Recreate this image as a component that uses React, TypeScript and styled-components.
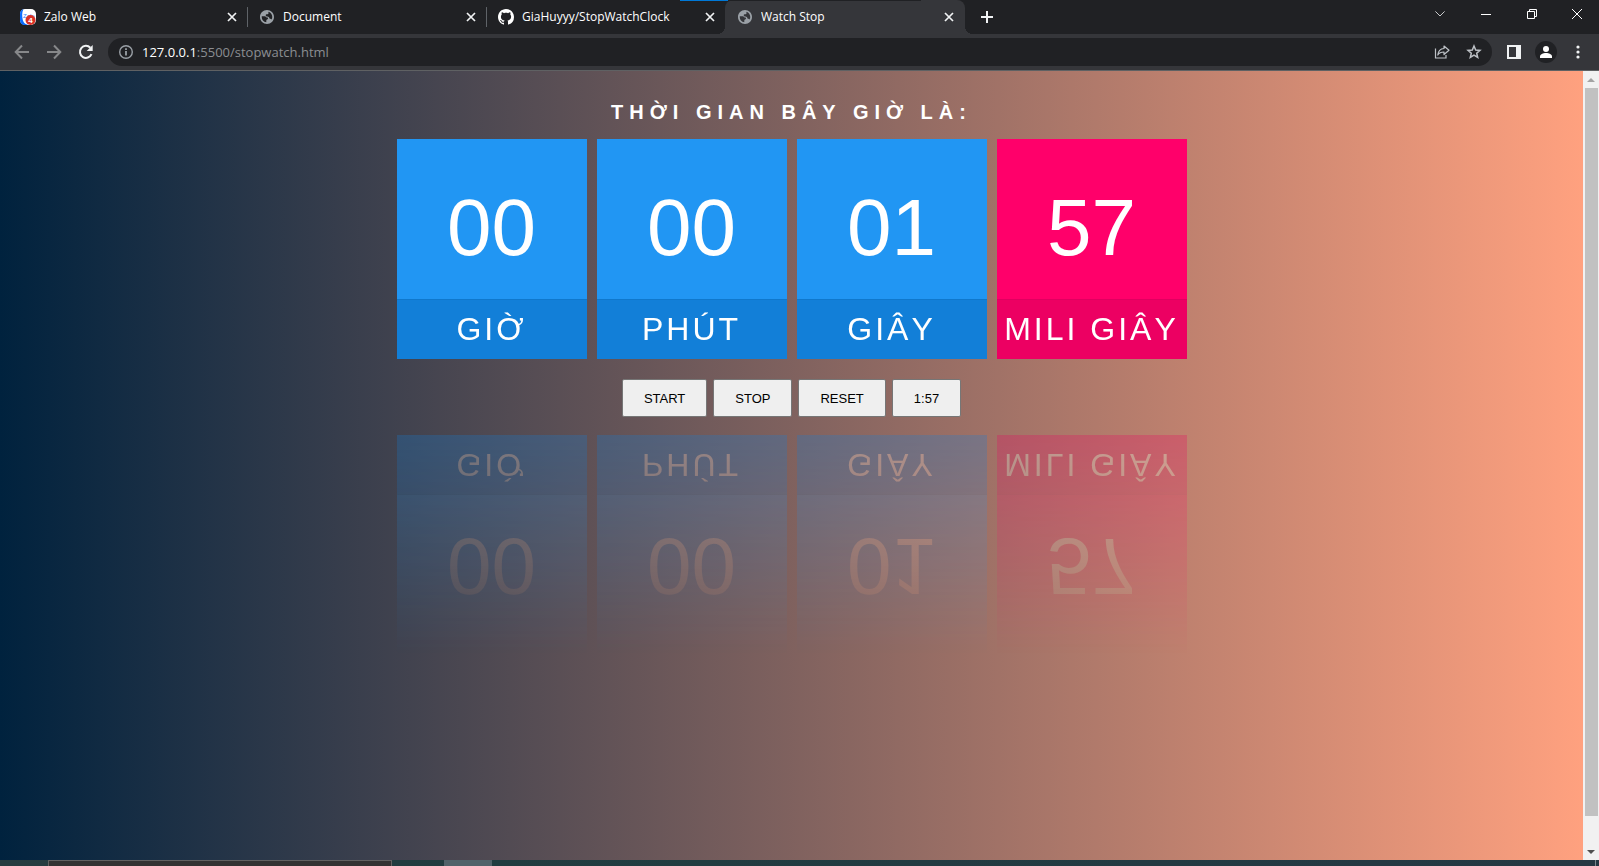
import React, { useEffect, useState } from "react";
import styled, { createGlobalStyle, css } from "styled-components";

const uiFont = `"Segoe UI", "Open Sans", "Noto Sans", sans-serif`;
const pageFont = `Arial, "Liberation Sans", sans-serif`;

const GlobalStyle = createGlobalStyle`
  * { box-sizing: border-box; }
  body { margin: 0; background: #202124; }
  button { font: inherit; color: inherit; cursor: pointer; }
`;

const Browser = styled.div`
  display: flex;
  flex-direction: column;
  min-height: 100vh;
`;

/* ---------- tab strip ---------- */

const TabStrip = styled.header`
  position: relative;
  display: flex;
  height: 34px;
  padding-left: 8px;
  background: #202124;
  color: #fff;
  font-family: ${uiFont};
  font-size: 12px;
`;

const TopEdge = styled.div`
  position: absolute;
  top: 0;
  left: 680px;
  width: 241px;
  height: 1px;
  background: linear-gradient(90deg, #0078d7 48px, #202124 48px);
`;

const Tab = styled.div<{ $active?: boolean; $divider?: boolean }>`
  position: relative;
  display: flex;
  align-items: center;
  gap: 8px;
  width: 239px;
  padding: 0 7px 0 12px;
  border-radius: 8px 8px 0 0;
  ${({ $divider }) =>
    $divider &&
    css`
      background: linear-gradient(#5f6368, #5f6368) left center / 1px 20px no-repeat;
    `}
  ${({ $active }) =>
    $active &&
    css`
      width: 240px;
      padding-right: 8px;
      background: #35363a;
      &::before,
      &::after {
        content: "";
        position: absolute;
        bottom: 0;
        width: 8px;
        height: 8px;
      }
      &::before {
        right: 100%;
        background: radial-gradient(circle at 0 0, #202124 8px, #35363a 8px);
      }
      &::after {
        left: 100%;
        background: radial-gradient(circle at 100% 0, #202124 8px, #35363a 8px);
      }
    `}
`;

const TabTitle = styled.span`
  flex: 1;
  overflow: hidden;
  white-space: nowrap;
  line-height: 16px;
`;

const IconButton = styled.button<{ $w?: number; $h?: number; $dim?: boolean }>`
  display: flex;
  align-items: center;
  justify-content: center;
  flex: none;
  width: ${({ $w = 32 }) => $w}px;
  height: ${({ $h = 28 }) => $h}px;
  padding: 0;
  border: 0;
  background: none;
  color: ${({ $dim }) => ($dim ? "#87888a" : "#f1f3f4")};
`;

const NewTab = styled.div`
  display: flex;
  align-items: center;
  padding-left: 8px;
`;

const WindowControls = styled.div`
  display: flex;
  margin-left: auto;
`;

/* ---------- toolbar ---------- */

const Toolbar = styled.nav`
  display: flex;
  align-items: center;
  height: 37px;
  padding: 0 5px 0 6px;
  background: #35363a;
  border-bottom: 1px solid #5f6163;
`;

const AddressBar = styled.form`
  display: flex;
  flex: 1;
  align-items: center;
  height: 28px;
  margin: 0 6px;
  padding: 0 2px 0 10px;
  border-radius: 14px;
  background: #202124;
  color: #9aa0a6;
  font-family: ${uiFont};
  font-size: 13px;
  line-height: 20px;
`;

const Host = styled.label`
  margin-left: 8px;
  color: #fff;
`;

const PathInput = styled.input`
  flex: 1;
  min-width: 0;
  padding: 0;
  border: 0;
  outline: 0;
  background: none;
  color: #8b8e92;
  font: inherit;
`;

/* ---------- page ---------- */

const Viewport = styled.div`
  display: flex;
  flex: 1;
`;

const Page = styled.main`
  display: flex;
  flex: 1;
  flex-direction: column;
  align-items: center;
  padding-top: 28px;
  background: linear-gradient(90deg, #00223e, #ffa17f);
  color: #fff;
  font-family: ${pageFont};
`;

const Heading = styled.h1`
  margin: 0;
  font-size: 20px;
  line-height: 26px;
  letter-spacing: 6px;
  text-transform: uppercase;
`;

const Clock = styled.div`
  display: flex;
  gap: 10px;
  margin-top: 14px;
  -webkit-box-reflect: below 76px linear-gradient(transparent, #0004);
`;

const Card = styled.div<{ $accent?: boolean }>`
  width: 190px;
  text-align: center;
  background: ${({ $accent }) => ($accent ? "#ff006a" : "#2196f3")};
`;

const Digits = styled.div`
  height: 160px;
  padding-top: 43px;
  font-size: 80px;
  line-height: 92px;
`;

const Unit = styled.div<{ $accent?: boolean }>`
  height: 60px;
  border-top: 1px solid ${({ $accent }) => ($accent ? "#e00060" : "#0f78cc")};
  background: ${({ $accent }) => ($accent ? "#ec0062" : "#127fd8")};
  font-size: 32px;
  line-height: 58px;
  letter-spacing: 3px;
  white-space: nowrap;
  text-transform: uppercase;
`;

const Actions = styled.div`
  display: flex;
  gap: 6px;
  margin-top: 20px;
`;

const ActionButton = styled.button`
  height: 38px;
  padding: 0 21px;
  border: 1px solid #767676;
  border-radius: 2px;
  background: #efefef;
  color: #000;
  font-size: 13px;
`;

/* ---------- scrollbar and taskbar ---------- */

const Scrollbar = styled.div`
  display: flex;
  flex-direction: column;
  width: 16px;
  background: #f1f1f1;
`;

const ScrollArrow = styled.button<{ $off?: boolean }>`
  display: flex;
  align-items: center;
  justify-content: center;
  height: 17px;
  padding: 0;
  border: 0;
  background: none;
  color: ${({ $off }) => ($off ? "#a3a3a3" : "#505050")};
`;

const ScrollTrack = styled.div`
  display: flex;
  flex: 1;
  flex-direction: column;
  padding: 0 1px 0 2px;
  &::after {
    content: "";
    flex: 1;
  }
`;

const ScrollThumb = styled.div`
  flex: 27;
  background: #c1c1c1;
`;

const Taskbar = styled.footer`
  display: flex;
  height: 6px;
  padding: 0 3px 0 48px;
  background: linear-gradient(90deg, #263c40, #203d40 30%, #253843);
`;

const TaskSearch = styled.div`
  width: 344px;
  border: 1px solid #626262;
  border-bottom: 0;
  background: #333;
`;

const TaskActive = styled.div`
  width: 48px;
  margin-left: 52px;
  background: #50636a;
`;

const ShowDesktop = styled.div`
  width: 1px;
  margin-left: auto;
  background: #7c888e;
`;

/* ---------- icons ---------- */

const CloseIcon = () => (
  <svg width="10" height="10" viewBox="0 0 10 10" stroke="currentColor" strokeWidth="1.7">
    <path d="M1 1l8 8M9 1l-8 8" />
  </svg>
);

const GlobeIcon = () => (
  <svg width="16" height="16" viewBox="0.6 0.6 22.8 22.8" fill="#9aa0a6">
    <path d="M12 2C6.480 2 2 6.480 2 12s4.480 10 10 10 10-4.480 10-10S17.520 2 12 2zM11 19.400c-3.950-.49-6.500-3.350-6.500-7.400 0-.3 0-.6.100-1H8.500c1.500 0 2 1 2.500 1.500.5.6 2.500.3 2.500 1.500 0 1.500-2.500 1-2.500 3zM18.500 15.500c-.5-.8-1.500-.7-2.300-1-1-.4-.7-2-1.700-2.600-1-.7-2.500-.4-3.500-.9-1.200-.7-1-2.500.2-2.900 1-.4 2.300.2 2.800-.8.5-.9-.5-1.800.3-2.700 3 1 5.200 4 5.200 7.400 0 1.300-.4 2.500-1 3.500z" />
  </svg>
);

const GithubIcon = () => (
  <svg width="16" height="16" viewBox="0 0 16 16" fill="#fff">
    <path d="M8 0C3.580 0 0 3.580 0 8c0 3.540 2.290 6.530 5.470 7.590.4.070.55-.17.55-.38 0-.19-.01-.82-.01-1.490-2.010.37-2.530-.49-2.690-.94-.09-.23-.48-.94-.82-1.130-.28-.15-.68-.52-.01-.53.63-.01 1.080.58 1.230.82.72 1.210 1.870.87 2.330.66.070-.52.28-.87.51-1.070-1.780-.2-3.640-.89-3.640-3.950 0-.87.31-1.590.82-2.150-.08-.2-.36-1.020.08-2.120 0 0 .67-.21 2.200.82.64-.18 1.320-.27 2-.27s1.360.09 2 .27c1.530-1.040 2.200-.82 2.200-.82.44 1.100.16 1.920.08 2.120.51.56.82 1.270.82 2.150 0 3.070-1.870 3.750-3.650 3.950.29.25.54.73.54 1.480 0 1.070-.01 1.930-.01 2.200 0 .21.15.46.55.38A8.010 8.010 0 0 0 16 8c0-4.420-3.580-8-8-8z" />
  </svg>
);

const ZaloIcon = () => (
  <svg width="16" height="16" viewBox="0 0 16 16" fontFamily="Arial, Liberation Sans, sans-serif">
    <rect width="16" height="16" rx="5" fill="#fff" />
    <path d="M3.500.3C1.200.8 0 2.600 0 5v6c0 3 2 5 5 5h6c-5 0-7.500-2-8.200-5C2 7.500 1.800 3 3.500.3z" fill="#0a6cff" />
    <text x="3" y="9" fontSize="6" fill="#2b80ff">
      Zalo
    </text>
    <circle cx="10.500" cy="11" r="5" fill="#d93025" />
    <text x="10.500" y="14" fontSize="8" fontWeight="700" fill="#fff" textAnchor="middle">
      4
    </text>
  </svg>
);

const ArrowIcon = ({ forward }: { forward?: boolean }) => (
  <svg width="16" height="16" viewBox="0 0 16 16" fill="none" stroke="currentColor" strokeWidth="2">
    <path d={forward ? "M1 8h13M8 1.500L14.300 8 8 14.500" : "M15 8H2M8 1.500L1.700 8 8 14.500"} />
  </svg>
);

const ReloadIcon = () => (
  <svg width="16" height="16" viewBox="0 0 16 16" fill="none">
    <path d="M13.500 10.200A6 6 0 1 1 12.300 3.700" stroke="currentColor" strokeWidth="2" />
    <path d="M14.700 1v6H8.700z" fill="currentColor" />
  </svg>
);

const InfoIcon = () => (
  <svg width="16" height="16" viewBox="0 0 16 16" fill="none">
    <circle cx="8" cy="8" r="6.300" stroke="#9aa0a6" strokeWidth="1.400" />
    <path d="M8 7v4.500M8 4.300v1.600" stroke="#9aa0a6" strokeWidth="1.800" />
  </svg>
);

const ShareIcon = () => (
  <svg width="16" height="16" viewBox="0 0 16 16" fill="none" stroke="#bdc1c6" strokeWidth="1.200">
    <path d="M1.500 4.500v9.500h10.500v-3" />
    <path d="M10 2l5 4.200-5 4.300V8C7 8 5 9 3.800 11 4.200 7.200 6.200 4.800 10 4.500z" strokeLinejoin="round" />
  </svg>
);

const StarIcon = () => (
  <svg width="16" height="16" viewBox="0 0 16 16" fill="none" stroke="#bdc1c6" strokeWidth="1.500">
    <path d="M8 2l1.700 4 4.300.4-3.300 2.800 1 4.300L8 11.200l-3.700 2.300 1-4.300L2 6.400 6.300 6z" />
  </svg>
);

const PanelIcon = () => (
  <svg width="14" height="14" viewBox="0 0 14 14">
    <path d="M0 0h14v14H0zM2 2v10h7V2z" fill="#f1f3f4" fillRule="evenodd" />
  </svg>
);

const ProfileIcon = () => (
  <svg width="22" height="22" viewBox="0 0 22 22">
    <circle cx="11" cy="11" r="11" fill="#202124" />
    <circle cx="11" cy="8" r="3" fill="#fff" />
    <path d="M5 17v-1.500c0-2.300 3-3.500 6-3.500s6 1.200 6 3.500V17z" fill="#fff" />
  </svg>
);

const MenuIcon = () => (
  <svg width="4" height="14" viewBox="0 0 4 14" fill="#f1f3f4">
    <circle cx="2" cy="2" r="1.600" />
    <circle cx="2" cy="7" r="1.600" />
    <circle cx="2" cy="12" r="1.600" />
  </svg>
);

const PlusIcon = () => (
  <svg width="12" height="12" viewBox="0 0 12 12" stroke="currentColor" strokeWidth="2">
    <path d="M6 0v12M0 6h12" />
  </svg>
);

const ChevronIcon = () => (
  <svg width="10" height="6" viewBox="0 0 10 6" fill="none" stroke="#c8cacc">
    <path d="M.4.4L5 5 9.600.4" />
  </svg>
);

const MinimizeIcon = () => (
  <svg width="10" height="10" viewBox="0 0 10 10">
    <path d="M0 5h10v1H0z" fill="#fff" />
  </svg>
);

const RestoreIcon = () => (
  <svg width="10" height="10" viewBox="0 0 10 10" fill="none" stroke="#fff">
    <path d="M.5 2.500h7v7h-7zM2.500 2.500v-2h7v7h-2" />
  </svg>
);

const WindowCloseIcon = () => (
  <svg width="10" height="10" viewBox="0 0 10 10" stroke="#fff">
    <path d="M0 0l10 10M10 0L0 10" />
  </svg>
);

const TriangleIcon = ({ down }: { down?: boolean }) => (
  <svg width="8" height="4" viewBox="0 0 8 4" fill="currentColor">
    <path d={down ? "M0 0h8L4 4z" : "M0 4h8L4 0z"} />
  </svg>
);

const tabs = [
  { title: "Zalo Web", icon: <ZaloIcon /> },
  { title: "Document", icon: <GlobeIcon />, divider: true },
  { title: "GiaHuyyy/StopWatchClock", icon: <GithubIcon />, divider: true },
  { title: "Watch Stop", icon: <GlobeIcon />, active: true },
];

const pad = (n: number) => String(n).padStart(2, "0");

export default function App() {
  const [ticks, setTicks] = useState(157);
  const [running, setRunning] = useState(false);

  useEffect(() => {
    if (!running) return;
    const id = setInterval(() => setTicks((t) => t + 1), 10);
    return () => clearInterval(id);
  }, [running]);

  const seconds = Math.floor(ticks / 100);
  const cards = [
    { unit: "Giờ", value: Math.floor(seconds / 3600) },
    { unit: "Phút", value: Math.floor(seconds / 60) % 60 },
    { unit: "Giây", value: seconds % 60 },
    { unit: "Mili giây", value: ticks % 100, accent: true },
  ];

  const reset = () => {
    setRunning(false);
    setTicks(0);
  };

  return (
    <Browser>
      <GlobalStyle />
      <TabStrip>
        {tabs.map((tab) => (
          <Tab key={tab.title} $active={tab.active} $divider={tab.divider}>
            {tab.icon}
            <TabTitle>{tab.title}</TabTitle>
            <IconButton $w={16} $h={16} aria-label={`Close ${tab.title}`}>
              <CloseIcon />
            </IconButton>
          </Tab>
        ))}
        <NewTab>
          <IconButton $w={28} aria-label="New tab">
            <PlusIcon />
          </IconButton>
        </NewTab>
        <WindowControls>
          <IconButton $w={46} aria-label="Search tabs">
            <ChevronIcon />
          </IconButton>
          <IconButton $w={46} aria-label="Minimize">
            <MinimizeIcon />
          </IconButton>
          <IconButton $w={46} aria-label="Restore">
            <RestoreIcon />
          </IconButton>
          <IconButton $w={44} aria-label="Close window">
            <WindowCloseIcon />
          </IconButton>
        </WindowControls>
        <TopEdge />
      </TabStrip>

      <Toolbar>
        <IconButton $dim aria-label="Back">
          <ArrowIcon />
        </IconButton>
        <IconButton $dim aria-label="Forward">
          <ArrowIcon forward />
        </IconButton>
        <IconButton aria-label="Reload">
          <ReloadIcon />
        </IconButton>
        <AddressBar onSubmit={(e) => e.preventDefault()}>
          <InfoIcon />
          <Host htmlFor="path">127.0.0.1</Host>
          <PathInput id="path" defaultValue=":5500/stopwatch.html" spellCheck={false} />
          <IconButton type="button" aria-label="Share">
            <ShareIcon />
          </IconButton>
          <IconButton type="button" aria-label="Bookmark">
            <StarIcon />
          </IconButton>
        </AddressBar>
        <IconButton aria-label="Side panel">
          <PanelIcon />
        </IconButton>
        <IconButton aria-label="Profile">
          <ProfileIcon />
        </IconButton>
        <IconButton aria-label="Menu">
          <MenuIcon />
        </IconButton>
      </Toolbar>

      <Viewport>
        <Page>
          <Heading>Thời gian bây giờ là:</Heading>
          <Clock>
            {cards.map((card) => (
              <Card key={card.unit} $accent={card.accent}>
                <Digits>{pad(card.value)}</Digits>
                <Unit $accent={card.accent}>{card.unit}</Unit>
              </Card>
            ))}
          </Clock>
          <Actions>
            <ActionButton onClick={() => setRunning(true)}>START</ActionButton>
            <ActionButton onClick={() => setRunning(false)}>STOP</ActionButton>
            <ActionButton onClick={reset}>RESET</ActionButton>
            <ActionButton>{`${seconds}:${pad(ticks % 100)}`}</ActionButton>
          </Actions>
        </Page>
        <Scrollbar>
          <ScrollArrow $off aria-label="Scroll up">
            <TriangleIcon />
          </ScrollArrow>
          <ScrollTrack>
            <ScrollThumb />
          </ScrollTrack>
          <ScrollArrow aria-label="Scroll down">
            <TriangleIcon down />
          </ScrollArrow>
        </Scrollbar>
      </Viewport>

      <Taskbar>
        <TaskSearch />
        <TaskActive />
        <ShowDesktop />
      </Taskbar>
    </Browser>
  );
}
